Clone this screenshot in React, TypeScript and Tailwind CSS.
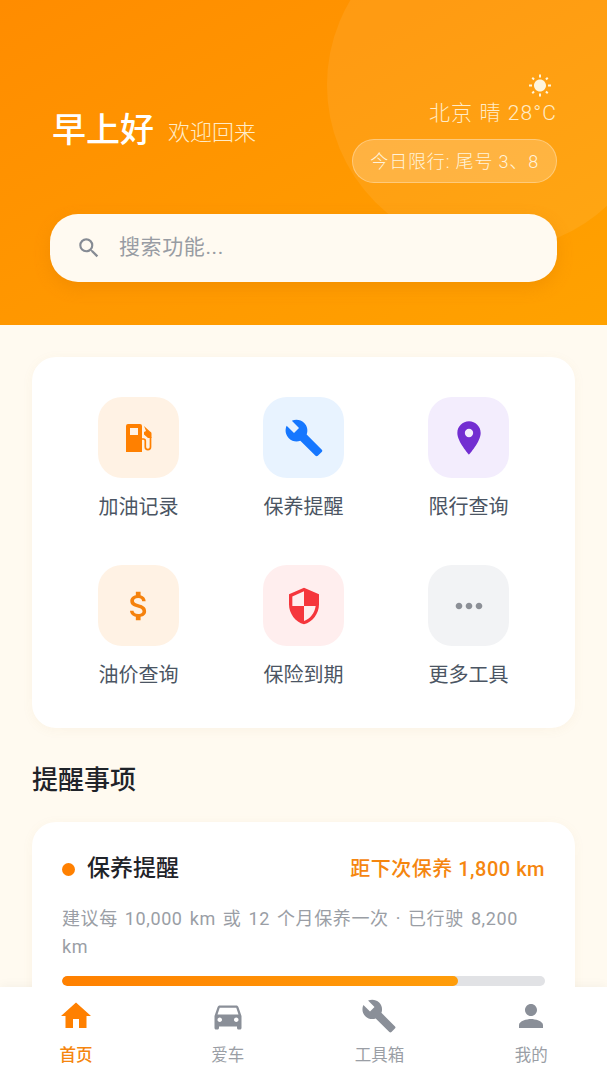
import React from 'react';
import {
  MdAttachMoney,
  MdBuild,
  MdDirectionsCar,
  MdHome,
  MdLocationOn,
  MdMoreHoriz,
  MdPerson,
  MdSearch,
  MdSecurity,
  MdWbSunny,
} from 'react-icons/md';

// filled pump, the icon-set version has a thin hollow nozzle
const PumpIcon: React.FC<{ className?: string }> = ({ className }) => (
  <svg viewBox="0 0 26 28" width="26" height="28" className={className}>
    <path fill="currentColor" fillRule="evenodd" d="M0 2a2 2 0 0 1 2-2h12a2 2 0 0 1 2 2v26H0zM4 4v7h8V4z" />
    <path fill="currentColor" d="M18 2l6 5.5a2 2 0 0 1 1.5 2V14h-3.5l-4-3.5V8l2-1z" />
    <path fill="none" stroke="currentColor" strokeWidth="1.7" d="M24.5 13v10a2.6 2.6 0 0 1-5.2 0v-6a2 2 0 0 0-2-2h-1.5" />
  </svg>
);

const tools = [
  { label: '加油记录', icon: PumpIcon, tile: 'bg-[#fff2e4]', color: 'text-[#ff8000]', size: '' },
  { label: '保养提醒', icon: MdBuild, tile: 'bg-[#e8f3ff]', color: 'text-[#1677ff]', size: 'text-[40px]' },
  { label: '限行查询', icon: MdLocationOn, tile: 'bg-[#f3edfd]', color: 'text-[#722ed1]', size: 'text-[40px]' },
  { label: '油价查询', icon: MdAttachMoney, tile: 'bg-[#fff2e4]', color: 'text-[#f5820d]', size: 'text-[38px]' },
  { label: '保险到期', icon: MdSecurity, tile: 'bg-[#ffeeee]', color: 'text-[#f5363c]', size: 'text-[40px]' },
  { label: '更多工具', icon: MdMoreHoriz, tile: 'bg-[#f2f3f5]', color: 'text-[#8c8f96]', size: 'text-[40px]' },
];

const tabs = [
  { label: '首页', icon: MdHome, active: true },
  { label: '爱车', icon: MdDirectionsCar, active: false },
  { label: '工具箱', icon: MdBuild, active: false },
  { label: '我的', icon: MdPerson, active: false },
];

const App: React.FC = () => {
  return (
    <div className="flex h-[1080px] w-[607px] flex-col overflow-hidden bg-[#fffaf0] font-['Roboto','Noto_Sans_CJK_SC',sans-serif]">
      <div className="relative flex-1 overflow-hidden">
        <header className="relative flex h-[325px] flex-col justify-end overflow-hidden bg-gradient-to-br from-[#ff8c00] to-[#ffa200] px-[50px] pb-[43px]">
          <div className="absolute left-[327px] top-[-81px] h-[332px] w-[332px] rounded-full bg-white/[0.07]" />
          <div className="relative mb-[31px] flex items-end justify-between">
            <div className="mb-[31px] flex items-baseline pl-[2px]">
              <span className="text-[34px] font-medium leading-[44px] text-white">早上好</span>
              <span className="ml-[14px] -translate-y-[2px] text-[22px] font-light text-[#ffecc8]">欢迎回来</span>
            </div>
            <div className="flex flex-col items-end">
              <MdWbSunny className="mr-[5px] text-[24px] text-[#fff5dc]" />
              <div className="mt-[1px] text-[21px] font-light leading-[28px] tracking-[1.1px] text-[#ffecc8]">北京 晴 28°C</div>
              <div className="mt-[12px] flex h-[44px] items-center rounded-full border border-white/30 bg-white/20 px-[17px] text-[18px] font-light tracking-[0.85px] text-[#fff3dc]">
                今日限行: 尾号 3、8
              </div>
            </div>
          </div>
          <div className="relative flex h-[68px] items-center rounded-[28px] bg-[#fffaf1] pl-[26px] shadow-[0_6px_16px_rgba(214,120,0,0.3)]">
            <MdSearch className="text-[26px] text-[#868b94]" />
            <span className="ml-[17px] text-[21px] tracking-[0.6px] text-[#989ca3]">搜索功能...</span>
          </div>
        </header>

        <main className="px-[32px] pt-[32px]">
          <section className="rounded-[24px] bg-white px-[24px] pb-[38px] pt-[40px] shadow-[0_2px_12px_rgba(180,130,60,0.06)]">
            <div className="grid grid-cols-3 gap-y-[43px]">
              {tools.map(tool => {
                const Icon = tool.icon;
                return (
                  <div key={tool.label} className="flex flex-col items-center">
                    <div className={`flex h-[81px] w-[81px] items-center justify-center rounded-[24px] ${tool.tile}`}>
                      <Icon className={`${tool.size} ${tool.color}`} />
                    </div>
                    <span className="mt-[14px] text-[20px] leading-[30px] text-[#4b5563]">{tool.label}</span>
                  </div>
                );
              })}
            </div>
          </section>

          <h2 className="mt-[32px] text-[26px] font-medium leading-[40px] text-[#1f2329]">提醒事项</h2>

          <section className="mt-[22px] rounded-[24px] bg-white px-[30px] pb-[30px] pt-[30px] shadow-[0_2px_12px_rgba(180,130,60,0.06)]">
            <div className="flex items-center justify-between">
              <div className="flex items-center">
                <span className="h-[13px] w-[13px] rounded-full bg-[#ff8000]" />
                <span className="ml-[12px] text-[23px] font-medium leading-[34px] text-[#1f2329]">保养提醒</span>
              </div>
              <span className="text-[20px] font-medium tracking-[0.5px] text-[#f5860f]">距下次保养 1,800 km</span>
            </div>
            <p className="mt-[19px] text-[18px] leading-[28px] tracking-[0.6px] text-[#9a9ea5] [word-spacing:2px]">
              建议每 10,000 km 或 12 个月保养一次 · 已行驶 8,200 km
            </p>
            <div className="mt-[15px] h-[10px] overflow-hidden rounded-full bg-[#e1e2e5]">
              <div className="h-full w-[82%] rounded-full bg-gradient-to-r from-[#ff8000] to-[#ff9d0a]" />
            </div>
          </section>
        </main>
      </div>

      <nav className="grid h-[93px] grid-cols-4 bg-white shadow-[0_-2px_10px_rgba(0,0,0,0.04)]">
        {tabs.map(tab => {
          const Icon = tab.icon;
          return (
            <div key={tab.label} className="flex flex-col items-center pt-[11px]">
              <Icon className={`text-[36px] ${tab.active ? 'text-[#ff8000]' : 'text-[#8a8f98]'}`} />
              <span className={`mt-[10px] text-[16.5px] leading-[24px] ${tab.active ? 'font-medium text-[#f5860f]' : 'text-[#9a9ea5]'}`}>
                {tab.label}
              </span>
            </div>
          );
        })}
      </nav>
    </div>
  );
};

export default App;
